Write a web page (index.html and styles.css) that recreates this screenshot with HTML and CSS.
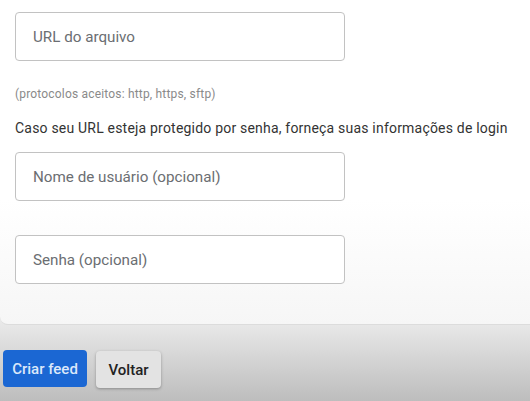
FILE: index.html
```html
<!DOCTYPE html>
<html lang="pt">
<head>
<meta charset="utf-8">
<link rel="stylesheet" href="styles.css">
</head>
<body>
<div class="card">
  <div class="field"><span class="ph">URL do arquivo</span></div>
  <p class="hint">(protocolos aceitos: http, https, sftp)</p>
  <p class="label">Caso seu URL esteja protegido por senha, forneça suas informações de login</p>
  <div class="field"><span class="ph">Nome de usuário (opcional)</span></div>
  <div class="field field-last"><span class="ph">Senha (opcional)</span></div>
</div>
<div class="actions">
  <button class="btn btn-primary">Criar feed</button>
  <button class="btn btn-secondary">Voltar</button>
</div>
</body>
</html>
```
FILE: styles.css
```css
html, body {
  margin: 0;
  height: 100%;
}
body {
  width: 530px;
  height: 401px;
  overflow: hidden;
  font-family: Roboto, "Liberation Sans", sans-serif;
  background: linear-gradient(#e8e8e8 324px, #bdbdbd 401px);
}
.card {
  box-sizing: border-box;
  height: 325px;
  padding: 12px 15px 0;
  background: linear-gradient(#ffffff 0, #ffffff 200px, #f6f6f6 325px);
  border-bottom: 1px solid #dcdcdc;
  border-bottom-left-radius: 8px;
}
.field {
  box-sizing: border-box;
  width: 330px;
  height: 49px;
  border: 1px solid #c2c2c2;
  border-radius: 4px;
  display: flex;
  align-items: center;
  padding-left: 17px;
  background: #fff;
}
.ph {
  font-size: 15.2px;
  color: #6b6e72;
}
.hint {
  margin: 26px 0 0;
  font-size: 12px;
  letter-spacing: 0.18px;
  line-height: 15px;
  color: #8a8a8a;
}
.label {
  margin: 18px 0 0;
  font-size: 14px;
  letter-spacing: 0.2px;
  line-height: 16px;
  color: #333;
}
.label + .field {
  margin-top: 16px;
}
.field-last {
  margin-top: 34px;
}
.actions {
  display: flex;
  gap: 9px;
  padding: 25px 0 0 3px;
}
.btn {
  font-family: Roboto, "Liberation Sans", sans-serif;
  font-size: 15px;
  font-weight: 500;
  height: 37px;
  border-radius: 4px;
  border: none;
  padding: 0;
}
.btn-primary {
  width: 84px;
  background: #1b67d3;
  color: #dbe8fa;
}
.btn-secondary {
  width: 65px;
  margin-top: 1px;
  background: #e3e3e3;
  color: #222;
  box-shadow: 0 1px 3px rgba(0,0,0,0.3);
}
```
